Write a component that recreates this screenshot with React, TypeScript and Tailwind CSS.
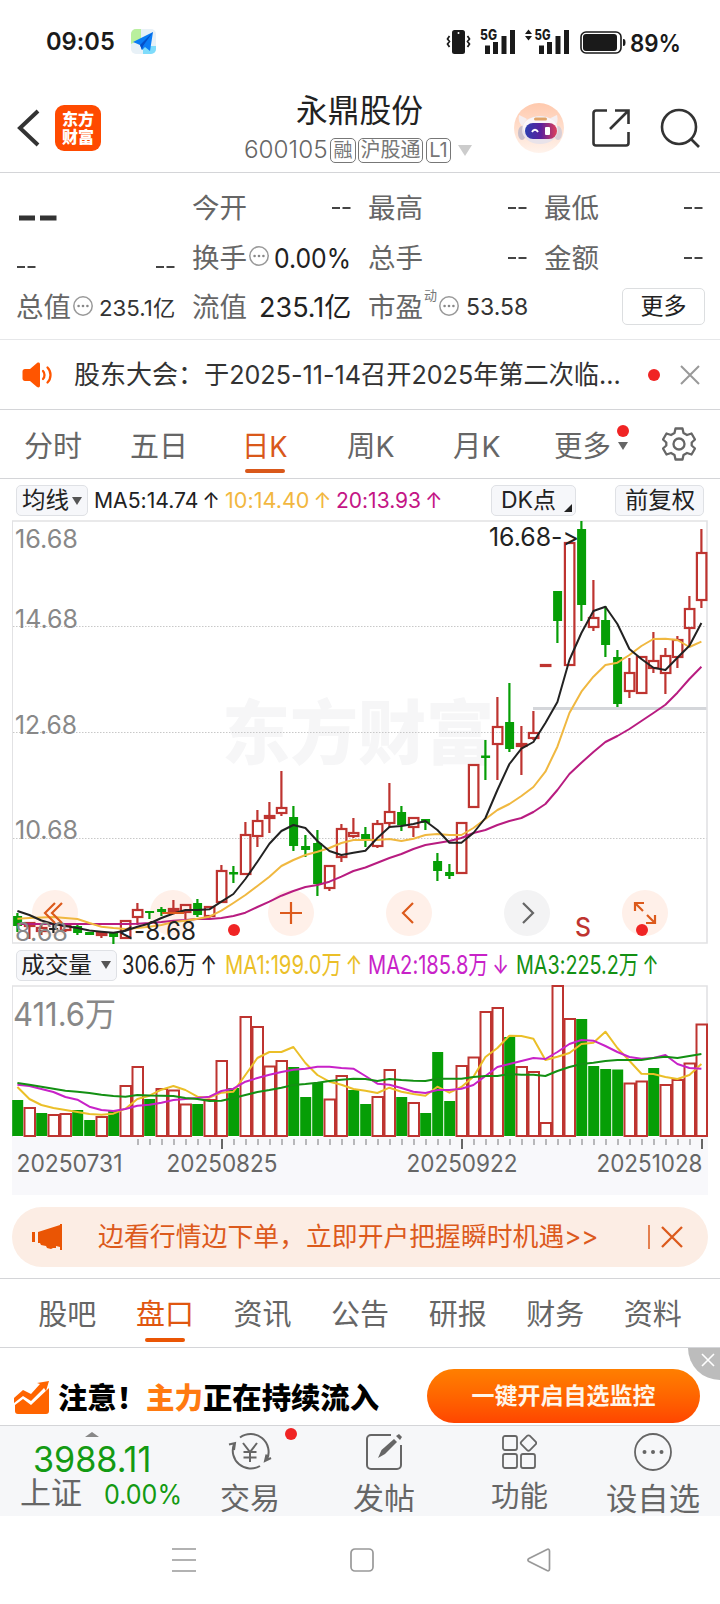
import { useLayoutEffect, useRef, useState, ReactNode } from "react";
import clsx from "clsx";

type Candle = [kind: "r" | "g" | "k", top: number, bottom: number, high: number, low: number];

// kind, body top/bottom, wick top/bottom
const CANDLES: Candle[] = [
  ["g", 916, 926, 913, 932], ["r", 923, 926, 922, 939], ["r", 928, 931, 923, 935], ["k", 928, 930, 925, 933],
  ["r", 926, 930, 924, 932], ["g", 926, 933, 924, 935], ["g", 932, 935, 932, 935], ["r", 933, 935, 932, 938],
  ["g", 933, 937, 933, 944], ["r", 921, 938, 921, 938], ["r", 910, 917, 903, 925], ["g", 911, 913, 911, 919],
  ["g", 909, 912, 907, 916], ["r", 909, 911, 900, 912], ["r", 905, 912, 905, 919], ["g", 903, 915, 899, 917],
  ["r", 907, 916, 906, 919], ["r", 871, 902, 865, 903], ["g", 872, 874.5, 866, 883], ["r", 835, 874, 822, 875],
  ["r", 821, 836, 810, 847], ["r", 816, 818, 802, 833], ["r", 808, 813, 771, 816], ["g", 817, 846, 806, 851],
  ["g", 846, 850, 835, 857], ["g", 843, 884, 830, 896], ["r", 866, 888, 865, 891], ["r", 829, 857, 824, 862],
  ["r", 833, 836, 818, 838], ["g", 834, 840, 827, 847], ["r", 824, 846, 820, 848], ["r", 812, 823, 783, 827],
  ["g", 812, 825, 806, 831], ["r", 818, 827, 817, 837], ["g", 819, 823, 819, 830], ["g", 861, 871, 853, 881],
  ["g", 872, 876, 864, 879], ["r", 823, 873, 822, 874], ["r", 765, 807, 765, 808], ["g", 755.5, 758, 740, 780],
  ["r", 727, 744, 697, 780], ["g", 722, 749, 683, 752], ["r", 744, 746, 726, 775], ["r", 733, 738, 711, 740],
  ["r", 665, 666, 664, 667], ["g", 591, 621, 591, 643], ["r", 543, 665, 543, 666], ["g", 529, 605, 521, 621],
  ["r", 618, 627, 580, 631], ["g", 620, 645, 606, 657], ["g", 657, 704, 650, 707], ["r", 673, 691, 658, 698],
  ["r", 657, 693, 657, 694], ["r", 661, 668, 632, 673], ["r", 656, 673, 648, 694], ["r", 640, 657, 636, 668],
  ["r", 609, 628, 596, 645], ["r", 553, 600, 529, 608],
];

const MA5 = [911, 915, 920.5, 924, 926, 928, 930.5, 931.7, 932.7, 930.7, 926.7, 923.5, 918, 913.5, 910, 910, 909.3, 901.7, 894, 879, 861.7, 843.7, 831, 825, 828, 841, 851, 855, 852.7, 850.7, 838, 827, 826, 824, 821, 830, 842.7, 842.7, 833, 818, 790, 764, 748.7, 742, 723, 702, 660, 633, 611, 606.7, 624, 649, 659, 667.7, 670, 657.7, 645.7, 623];
const MA10 = [918.7, 918, 917.5, 917, 918, 919, 923, 926.7, 928, 929, 928, 926.7, 925, 922, 920.7, 918.7, 916.7, 910.7, 903, 895, 886, 876.7, 866, 860, 855, 851.7, 848, 843, 840, 840, 840, 839, 841, 838.7, 835, 834, 835, 835, 828, 819, 810, 804, 796, 787, 771.7, 746.7, 713, 691.7, 676.7, 665, 662.7, 655, 646, 639, 638.7, 640, 647, 641.7];
const MA20 = [924, 924, 924, 924, 924, 924, 924, 924, 924, 924, 923.7, 923, 922, 920.7, 920, 919, 919, 918, 916, 912.7, 907, 901.7, 895.7, 891, 887, 885, 881.7, 876.7, 871, 867.5, 862.7, 858, 854, 849, 845, 843, 841, 838, 833, 830, 825, 821, 818, 812, 804, 790, 774, 762.7, 752, 742, 736, 729, 721, 713, 704.7, 692.7, 679, 666.7];

const VOLUMES = [1100, 1108, 1113, 1115, 1114, 1110, 1120, 1117, 1111, 1086, 1067, 1099, 1089, 1090.5, 1104.5, 1104, 1100, 1061, 1088, 1017, 1027, 1066.5, 1061, 1067, 1097, 1083, 1099.5, 1076, 1090, 1104, 1097, 1070, 1097, 1103, 1113, 1052, 1101, 1066, 1057.5, 1012, 1008, 1037, 1067, 1072, 1123, 986, 1019, 1019, 1066, 1069, 1069.5, 1083.5, 1081.5, 1068, 1085, 1080, 1063.5, 1024.5];
const VOL_KINDS = "grgrrggrgrrgrrrgrrgrrrrgggrrggrrgrgggrrrrgrrrrrggggrrgrrrr";
const VMA1 = [1087, 1099, 1105, 1108, 1110, 1112, 1114, 1114.7, 1113.7, 1108.7, 1099, 1095.7, 1089.7, 1086, 1090, 1096.7, 1097.7, 1092.7, 1091.7, 1075, 1058, 1052, 1052, 1047, 1063, 1075, 1081.7, 1084.7, 1089, 1090.7, 1093, 1087.7, 1091.7, 1094, 1095.7, 1086.7, 1092.7, 1087, 1076.7, 1057, 1048, 1035.7, 1036, 1038.7, 1060, 1056.7, 1053, 1044, 1042.7, 1031.7, 1048, 1060.7, 1073.7, 1074, 1077, 1079, 1075, 1064];
const VMA2 = [1084.7, 1086, 1089, 1092, 1097, 1099.7, 1106.7, 1110, 1111, 1109, 1105.7, 1104.7, 1102.7, 1100, 1099, 1098, 1096.7, 1091, 1088.7, 1081.7, 1078, 1074.7, 1072, 1069.7, 1068.7, 1066.7, 1066.7, 1068, 1068.7, 1076, 1083.7, 1084.7, 1088, 1091.7, 1093, 1090, 1090, 1088.7, 1085, 1076, 1067, 1064, 1061, 1058, 1059, 1052, 1044, 1040, 1040.7, 1046, 1052, 1057, 1058.7, 1058, 1055, 1064, 1068, 1068.7];
const VMA3 = [1083, 1084.7, 1086.7, 1088.7, 1090.7, 1091.7, 1093, 1094.7, 1096, 1096.7, 1095, 1095.5, 1095.7, 1096, 1098, 1099, 1101, 1100.7, 1098, 1095, 1092, 1090, 1087.7, 1085, 1084, 1082.7, 1081, 1079.7, 1078.7, 1079, 1081, 1079, 1080, 1080.7, 1081, 1078.7, 1078.7, 1078.7, 1077, 1076, 1076, 1074, 1074.7, 1074.7, 1076, 1071, 1067, 1064, 1062.7, 1061, 1060, 1060, 1060, 1058, 1056.7, 1058, 1056, 1054];

const RED = "#be3430";
const GREEN = "#069e06";

const px = (i: number) => 17.4 + i * 12;
const toPoints = (ys: number[]) => ys.map((y, i) => `${px(i)},${y}`).join(" ");

/* Squeezes or stretches a single line of text so that it fills exactly `w` pixels */
function Fit({ w, className, children }: { w: number; className?: string; children: ReactNode }) {
  const ref = useRef<HTMLSpanElement>(null);
  const [scale, setScale] = useState(1);

  useLayoutEffect(() => {
    if (ref.current) setScale(w / ref.current.offsetWidth);
  }, [w]);

  return (
    <span className={clsx("inline-flex shrink-0 whitespace-nowrap", className)} style={{ width: w }}>
      <span ref={ref} className="inline-block shrink-0 origin-left" style={{ transform: `scaleX(${scale})` }}>
        {children}
      </span>
    </span>
  );
}

function Dots() {
  return (
    <svg width="20" height="20" viewBox="0 0 20 20" className="shrink-0">
      <circle cx="10" cy="10" r="9.2" fill="none" stroke="#999" strokeWidth="1.5" />
      <circle cx="5.6" cy="10" r="1.3" fill="#888" />
      <circle cx="10" cy="10" r="1.3" fill="#888" />
      <circle cx="14.4" cy="10" r="1.3" fill="#888" />
    </svg>
  );
}

function StatusBar() {
  return (
    <div className="flex h-20 items-center pl-[46px] pr-[28px] pt-[3px] text-[#1a1a1a]">
      <Fit w={69} className="text-[24px] font-semibold leading-none">09:05</Fit>
      <svg width="25" height="25" viewBox="0 0 25 25" className="ml-[16px]">
        <rect width="25" height="25" rx="5" fill="#e8f1f7" />
        <path d="M5 0h5v10L0 15V5a5 5 0 0 1 5-5z" fill="#b9ef9d" />
        <path d="M12 17h13v3a5 5 0 0 1-5 5h-8z" fill="#7fdcfb" />
        <path d="M22 3 2 13l7 3 2 5 3-3 5 4z" fill="#0a7cf5" />
        <path d="M22 3 9 16l2 5 1-4z" fill="#0550c8" />
      </svg>
      <svg width="246" height="42" viewBox="0 -8 246 42" className="ml-auto" fill="#1a1a1a">
        <rect x="6" y="1" width="13" height="24" rx="2.5" />
        <circle cx="12.5" cy="4" r="1" fill="#fff" />
        <path d="m3.500 7-2 3 2 2.500-2 2.500 2 3M21.500 7l2 3-2 2.500 2 2.500-2 3" fill="none" stroke="#1a1a1a" strokeWidth="1.700" />
        <text x="34" y="11" fontSize="14" fontWeight="800" textLength="17" lengthAdjust="spacingAndGlyphs">5G</text>
        <path d="M39 16.500h5V25h-5zM47 13h5v12h-5zM55.500 7h5v18h-5zM64 1h5v24h-5z" />
        <path d="m79 5 3.500-4.500L86 5zM79 7h7l-3.500 4.500z" />
        <text x="88.500" y="11" fontSize="14" fontWeight="800" textLength="16" lengthAdjust="spacingAndGlyphs">5G</text>
        <path d="M93 16.500h5V25h-5zM101 13h5v12h-5zM109.500 7h5v18h-5zM118 1h5v24h-5z" />
        <rect x="135" y="3" width="40" height="21" rx="5" fill="none" stroke="#1a1a1a" strokeWidth="1.600" />
        <rect x="137" y="5" width="34" height="17" rx="3" />
        <path d="M177 10c2 0 2.500 1 2.500 3.500S179 17 177 17z" />
        <text x="184" y="22.500" fontSize="24" fontWeight="600" textLength="51" lengthAdjust="spacingAndGlyphs">89%</text>
      </svg>
    </div>
  );
}

function Header() {
  return (
    <header className="flex h-[93px] items-center border-b border-[#d4d5d8] pl-[17px] pr-[20px]">
      <svg width="24" height="38" viewBox="0 0 24 38" className="mt-1">
        <path d="M21 2 3 19l18 17" fill="none" stroke="#333" strokeWidth="4" />
      </svg>
      <div className="ml-[14px] mt-1 flex h-[46px] w-[46px] flex-col items-center justify-center rounded-[9px] bg-[#ff4a00] text-[16px] font-black leading-[18px] text-white">
        <span>东方</span>
        <span>财富</span>
      </div>

      <div className="ml-[143px] flex w-[230px] flex-col pt-1">
        <div className="flex h-[40px] items-center pl-[52px]">
          <Fit w={127} className="text-[32px] leading-none text-[#222]">永鼎股份</Fit>
        </div>
        <div className="mt-[4px] flex h-[30px] items-center text-[#777]">
          <Fit w={84} className="text-[24px] font-light leading-none text-[#666]">600105</Fit>
          <span className="ml-[2px] flex h-[25px] w-[26px] items-center justify-center rounded-[5px] border-[1.500px] border-[#777] text-[19px] leading-none">融</span>
          <span className="ml-[2px] flex h-[25px] w-[65px] items-center justify-center rounded-[5px] border-[1.500px] border-[#777] text-[20px] leading-none">沪股通</span>
          <span className="ml-[3px] flex h-[25px] w-[25px] items-center justify-center rounded-[5px] border-[1.500px] border-[#777] text-[20px] leading-none">L1</span>
          <svg width="14" height="11" viewBox="0 0 14 11" className="ml-[7px] shrink-0">
            <path d="M0 0h14L7 11z" fill="#ccc" />
          </svg>
        </div>
      </div>

      <div className="ml-auto mt-1 flex items-center">
        <svg width="50" height="50" viewBox="0 0 50 50">
          <defs>
            <linearGradient id="halo" x1="0" y1="0" x2="0" y2="1">
              <stop offset="0" stopColor="#ffc9ad" />
              <stop offset="1" stopColor="#fff3ec" />
            </linearGradient>
            <linearGradient id="visor" x1="0" y1="0" x2="1" y2="0">
              <stop offset="0" stopColor="#2b3fb0" />
              <stop offset="0.5" stopColor="#5b209c" />
              <stop offset="1" stopColor="#e0405a" />
            </linearGradient>
          </defs>
          <circle cx="25" cy="25" r="25" fill="url(#halo)" />
          <path d="M5 12c2 1 5 2 8 4l-5 7c-3-3-4-7-3-11zM43 12c-2 1-5 2-8 4l6 7c3-3 3-7 2-11z" fill="#f5eef0" />
          <ellipse cx="8" cy="30" rx="4" ry="7" fill="#c9bfc9" />
          <ellipse cx="44" cy="30" rx="4" ry="7" fill="#d9cfd6" />
          <ellipse cx="26" cy="27" rx="18" ry="14" fill="#e9e3ea" />
          <ellipse cx="26" cy="24" rx="17" ry="10.500" fill="#faf6f8" />
          <rect x="11" y="20" width="32" height="16" rx="8" fill="url(#visor)" />
          <rect x="20" y="14.500" width="13" height="3" rx="1.500" fill="#e0a468" />
          <path d="M18 29c1.500-3 4.500-3 6 0" fill="none" stroke="#fff" strokeWidth="1.800" />
          <rect x="31" y="24" width="5" height="8" rx="1" fill="#fff" />
        </svg>
        <svg width="38" height="38" viewBox="0 0 38 38" className="ml-[28px]" fill="none" stroke="#333" strokeWidth="2.600">
          <path d="M15 1.500H4A2.500 2.500 0 0 0 1.500 4v30A2.500 2.500 0 0 0 4 36.500h30a2.500 2.500 0 0 0 2.500-2.500V23M23 1.500h13.500V15M36.500 1.500 18 20" />
        </svg>
        <svg width="40" height="40" viewBox="0 0 40 40" className="ml-[30px]" fill="none" stroke="#333" strokeWidth="2.600">
          <circle cx="19" cy="19" r="17" />
          <path d="m31 31 8 8" />
        </svg>
      </div>
    </header>
  );
}

function Label({ children }: { children: ReactNode }) {
  return <Fit w={55} className="text-[27px] leading-none text-[#666]">{children}</Fit>;
}

function Dash() {
  return (
    <svg width="20" height="4" viewBox="0 0 20 4" className="shrink-0">
      <path d="M1 2h8M11.500 2h8" stroke="#444" strokeWidth="2" />
    </svg>
  );
}

function Quote() {
  return (
    <section className="grid h-[167px] grid-cols-[160px_159px_159px_159px] grid-rows-[50px_50px_49px] gap-x-[17px] border-b border-[#e6e7e9] pl-[15px] pt-[10px]">
      <div className="flex items-center pl-[4px]">
        <svg width="38" height="6" viewBox="0 0 38 6" className="mt-[20px]">
          <path d="M0 3h16M21 3h16.500" stroke="#333" strokeWidth="5" />
        </svg>
      </div>
      <div className="flex items-center justify-between"><Label>今开</Label><Dash /></div>
      <div className="flex items-center justify-between"><Label>最高</Label><Dash /></div>
      <div className="flex items-center justify-between"><Label>最低</Label><Dash /></div>

      <div className="flex items-center justify-between pl-px pt-[17px]"><Dash /><Dash /></div>
      <div className="flex items-center">
        <Label>换手</Label>
        <span className="mb-1 ml-[2px]"><Dots /></span>
        <Fit w={77} className="ml-auto text-[27px] leading-none text-[#222]">0.00%</Fit>
      </div>
      <div className="flex items-center justify-between"><Label>总手</Label><Dash /></div>
      <div className="flex items-center justify-between"><Label>金额</Label><Dash /></div>

      <div className="flex items-center pl-px">
        <Label>总值</Label>
        <span className="mb-1 ml-[2px]"><Dots /></span>
        <Fit w={76} className="ml-auto text-[22px] leading-none text-[#333]">235.1亿</Fit>
      </div>
      <div className="flex items-center justify-between">
        <Label>流值</Label>
        <Fit w={92} className="text-[27px] leading-none text-[#222]">235.1亿</Fit>
      </div>
      <div className="flex items-center">
        <Label>市盈</Label>
        <span className="mb-6 ml-px text-[13px] leading-none text-[#777]">动</span>
        <span className="mb-1 ml-[2px]"><Dots /></span>
        <Fit w={62} className="ml-[7px] text-[23px] leading-none text-[#333]">53.58</Fit>
      </div>
      <div className="flex items-center pb-[3px] pl-[78px]">
        <div className="flex h-[37px] w-[83px] shrink-0 items-center justify-center rounded-[5px] border-[1.500px] border-[#dcdee0] text-[23px] leading-none text-[#222]">更多</div>
      </div>
    </section>
  );
}

function Notice() {
  return (
    <section className="flex h-[70px] items-center border-b border-[#d4d5d8] pl-[22px]">
      <svg width="31" height="26" viewBox="0 0 31 26" fill="#ff5500">
        <path d="M3 7h5l7-6c1.500-1 3-.5 3 1.500v21c0 2-1.500 2.500-3 1.500l-7-6H3c-1.500 0-2.500-1-2.500-2.500v-7C.5 8 1.500 7 3 7z" />
        <path d="M21 9c2 2 2 6 0 8M25.500 5.500c4 4 4 11 0 15" fill="none" stroke="#ff5500" strokeWidth="2.300" strokeLinecap="round" />
      </svg>
      <Fit w={130} className="ml-[21px] text-[26px] leading-none text-[#333]">股东大会：</Fit>
      <Fit w={417} className="text-[26px] leading-none text-[#333]">于2025-11-14召开2025年第二次临...</Fit>
      <span className="ml-[27px] h-[12px] w-[12px] rounded-full bg-[#f02424]" />
      <svg width="20" height="20" viewBox="0 0 20 20" className="ml-[20px]">
        <path d="m1 1 18 18M19 1 1 19" stroke="#999" strokeWidth="2" />
      </svg>
    </section>
  );
}

const PERIODS: [string, number][] = [["分时", 58], ["五日", 58], ["日K", 46], ["周K", 48], ["月K", 48]];

function PeriodTabs() {
  return (
    <nav className="flex h-[69px] items-center border-b border-[#d4d5d8] text-[29px] leading-none text-[#666]">
      {PERIODS.map(([name, w], i) => (
        <div key={name} className={clsx("relative flex h-full w-[106px] items-center justify-center pt-[4px]", i === 2 && "text-[#d9581a]")}>
          <Fit w={w}>{name}</Fit>
          {i === 2 && <span className="absolute bottom-[5px] h-[4px] w-10 rounded-full bg-[#d9581a]" />}
        </div>
      ))}
      <div className="relative ml-[24px] flex items-center pt-[4px]">
        <Fit w={57}>更多</Fit>
        <svg width="10" height="8" viewBox="0 0 10 8" className="ml-[7px]">
          <path d="M0 0h10L5 8z" fill="#666" />
        </svg>
        <span className="absolute -right-px -top-[3px] h-3 w-3 rounded-full bg-[#f02424]" />
      </div>
      <svg width="34" height="34" viewBox="0 0 34 34" className="ml-[34px]" fill="none" stroke="#666" strokeWidth="2.300" strokeLinejoin="round">
        <path d="M13.500 1.500h7l1 4.500 3.500 2 4.500-1.500 3.500 6-3.300 3v3l3.300 3-3.500 6-4.500-1.500-3.500 2-1 4.500h-7l-1-4.500-3.500-2-4.500 1.500-3.500-6 3.300-3v-3l-3.300-3 3.500-6L9 8l3.500-2z" />
        <circle cx="17" cy="17" r="5.500" />
      </svg>
    </nav>
  );
}

function Chip({ className, children }: { className?: string; children: ReactNode }) {
  return (
    <div className={clsx("flex h-[31px] shrink-0 items-center rounded-[5px] border-[1.500px] border-[#dfe1e5] bg-[#f6f7fa] text-[23px] leading-none text-[#222]", className)}>
      {children}
    </div>
  );
}

function AverageRow() {
  return (
    <div className="flex h-[41px] items-center pl-4 pr-4 pt-[2px] text-[21px] leading-none">
      <Chip className="w-[72px] pl-[5px]">
        <Fit w={47}>均线</Fit>
        <svg width="10" height="8" viewBox="0 0 10 8" className="ml-[3px]"><path d="M0 0h10L5 8z" fill="#555" /></svg>
      </Chip>
      <Fit w={126} className="ml-[6px] text-[#222]">MA5:14.74{"\u2009"}↑</Fit>
      <Fit w={106} className="ml-[5px] text-[#f2b740]">10:14.40{"\u2009"}↑</Fit>
      <Fit w={106} className="ml-[5px] text-[#c41585]">20:13.93{"\u2009"}↑</Fit>
      <Chip className="relative ml-auto w-[85px] pl-[9px]">
        <Fit w={55}>DK点</Fit>
        <svg width="8" height="8" viewBox="0 0 8 8" className="absolute bottom-[3px] right-[3px]"><path d="M8 0v8H0z" fill="#222" /></svg>
      </Chip>
      <Chip className="ml-[39px] w-[89px] pl-[9px]">
        <Fit w={70}>前复权</Fit>
      </Chip>
    </div>
  );
}

function KLineChart() {
  return (
    <svg width="720" height="425" viewBox="0 520 720 425" className="block">
      <text x="222" y="759" fontSize="70" fontWeight="900" fill="#f6f6f7" textLength="272" lengthAdjust="spacingAndGlyphs">东方财富</text>
      <g stroke="#c8c8c8" strokeDasharray="1.500 1.500">
        <path d="M13 626.500h694M13 732.500h694M13 838.500h694" />
      </g>
      <path d="M533 708.500h174" stroke="#d4d6da" strokeWidth="3" />
      <path d="M12.500 521v422" stroke="#e2e2e4" />
      <path d="M12 521h695v422H12" fill="none" stroke="#e2e2e4" strokeWidth="1.600" />

      {[55, 173, 291, 409, 645].map((x) => <circle key={x} cx={x} cy="913" r="23" fill="#fff0e9" />)}
      <circle cx="527" cy="913" r="23" fill="#f3f3f4" />

      {CANDLES.map(([kind, top, bottom, high, low], i) => {
        const x = px(i);
        if (kind === "r") {
          return (
            <g key={i} stroke={RED} strokeWidth="2.200" fill="none">
              <path d={`M${x} ${high}V${top}M${x} ${bottom}V${low}`} />
              <rect x={x - 4.5} y={top} width="9.500" height={bottom - top} />
            </g>
          );
        }
        const color = kind === "g" ? GREEN : "#222";
        return (
          <g key={i} fill={color}>
            <rect x={x - 1.1} y={high} width="2.200" height={low - high} />
            <rect x={x - 4.3} y={top} width="9" height={bottom - top} />
          </g>
        );
      })}

      <g fill="none" strokeWidth="2" strokeLinejoin="round">
        <polyline points={toPoints(MA20)} stroke="#b81c80" />
        <polyline points={toPoints(MA10)} stroke="#f0b840" />
        <polyline points={toPoints(MA5)} stroke="#222" />
      </g>

      <g fontSize="25.500" fill="#888">
        <text x="15" y="547.500" textLength="63" lengthAdjust="spacingAndGlyphs">16.68</text>
        <text x="15" y="627.500" textLength="63" lengthAdjust="spacingAndGlyphs">14.68</text>
        <text x="15" y="733.500" textLength="62" lengthAdjust="spacingAndGlyphs">12.68</text>
        <text x="15" y="838.500" textLength="63" lengthAdjust="spacingAndGlyphs">10.68</text>
        <text x="15" y="940.500" textLength="53" lengthAdjust="spacingAndGlyphs">8.68</text>
      </g>
      <g fontSize="25.500" fill="#222">
        <text x="489" y="545.500" textLength="90" lengthAdjust="spacingAndGlyphs">16.68-&gt;</text>
        <text x="118" y="939.500" textLength="78" lengthAdjust="spacingAndGlyphs">&lt;-8.68</text>
      </g>

      <g fill="none" stroke="#dc5a1c" strokeWidth="2.200">
        <path d="M55 903 45 913l10 10M62 903 52 913l10 10" />
        <path d="M162 913h22M280 913h22M291 902v22" />
        <path d="m413 903-10 10 10 10" />
        <path d="m643 911-8-8M635 911v-8h9M647 915l8 8M655 915v8h-9" />
      </g>
      <path d="m523 903 10 10-10 10" fill="none" stroke="#666" strokeWidth="2.200" />
      <circle cx="234" cy="930" r="6" fill="#f02424" />
      <circle cx="642" cy="930" r="6" fill="#f02424" />
      <text x="575" y="936" fontSize="26" fontWeight="500" fill={RED} textLength="16" lengthAdjust="spacingAndGlyphs">S</text>
    </svg>
  );
}

function VolumeRow() {
  return (
    <div className="flex h-[40px] items-center pl-4 text-[26px] leading-none">
      <Chip className="w-[101px] pl-[4px]">
        <Fit w={71}>成交量</Fit>
        <svg width="10" height="8" viewBox="0 0 10 8" className="ml-[9px]"><path d="M0 0h10L5 8z" fill="#555" /></svg>
      </Chip>
      <Fit w={95} className="ml-[5px] text-[#222]">306.6万{"\u2009"}↑</Fit>
      <Fit w={137} className="ml-[8px] text-[#ebbf28]">MA1:199.0万{"\u2009"}↑</Fit>
      <Fit w={141} className="ml-[6px] text-[#c822c8]">MA2:185.8万{"\u2009"}↓</Fit>
      <Fit w={143} className="ml-[7px] text-[#139013]">MA3:225.2万{"\u2009"}↑</Fit>
    </div>
  );
}

function VolumeChart() {
  const ticks = Array.from({ length: 48 }, (_, i) => i + 10);
  return (
    <svg width="720" height="210" viewBox="0 985 720 210" className="block">
      <rect x="12" y="1137" width="696" height="58" fill="#f8f8fb" />
      <path d="M12.500 1137V986" stroke="#e2e2e4" />
      <path d="M12 986h695v151" fill="none" stroke="#e2e2e4" strokeWidth="1.600" />
      <text x="13" y="1025.500" fontSize="33" fill="#888" textLength="103" lengthAdjust="spacingAndGlyphs">411.6万</text>
      {VOLUMES.map((top, i) =>
        VOL_KINDS[i] === "r" ? (
          <rect key={i} x={px(i) - 4.9} y={top} width="10.500" height={1136 - top} fill="#fff" stroke={RED} strokeWidth="2" />
        ) : (
          <rect key={i} x={px(i) - 5.2} y={top} width="11" height={1136 - top} fill={GREEN} />
        ),
      )}
      <g fill="none" strokeWidth="2" strokeLinejoin="round">
        <polyline points={toPoints(VMA1)} stroke="#ebbf28" />
        <polyline points={toPoints(VMA2)} stroke="#c822c8" />
        <polyline points={toPoints(VMA3)} stroke="#139013" />
      </g>
      {ticks.map((i) => {
        const major = i === 17 || i === 37 || i === 57;
        return <rect key={i} x={px(i) - 0.4} y="1139" width="2" height={major ? 10 : 6} fill={major ? "#666" : "#b8b8bb"} />;
      })}
      <g fontSize="24" fill="#666">
        <text x="16.500" y="1171.500" textLength="106" lengthAdjust="spacingAndGlyphs">20250731</text>
        <text x="166.500" y="1171.500" textLength="111" lengthAdjust="spacingAndGlyphs">20250825</text>
        <text x="406.500" y="1171.500" textLength="111" lengthAdjust="spacingAndGlyphs">20250922</text>
        <text x="596.500" y="1171.500" textLength="106" lengthAdjust="spacingAndGlyphs">20251028</text>
      </g>
    </svg>
  );
}

function PromoBar() {
  return (
    <div className="mx-3 mt-3 flex h-[60px] items-center rounded-full bg-[#fcede4] pl-5">
      <svg width="30" height="26" viewBox="0 0 30 26" fill="#ea5504">
        <path d="M0 8h3v10H0zM6 8l22-7V0h2v26h-2v-3l-4-1v2h-3l-2 1-4-1-1-2-5-1-1-2H6z" />
      </svg>
      <Fit w={207} className="ml-[36px] text-[26px] leading-none text-[#dc5a1c]">边看行情边下单，</Fit>
      <Fit w={292} className="ml-px text-[26px] leading-none text-[#dc5a1c]">立即开户把握瞬时机遇&gt;&gt;</Fit>
      <svg width="36" height="24" viewBox="0 0 36 24" className="ml-[50px]" fill="none" stroke="#dc5a1c">
        <path d="M1 0v24" strokeWidth="1.500" />
        <path d="m14 2 20 20M34 2 14 22" strokeWidth="2.300" />
      </svg>
    </div>
  );
}

function InfoTabs() {
  return (
    <nav className="mt-[11px] flex h-[70px] items-center border-y border-[#d4d5d8] pl-[18.500px] text-[29px] leading-none text-[#666]">
      {["股吧", "盘口", "资讯", "公告", "研报", "财务", "资料"].map((name, i) => (
        <div key={name} className={clsx("relative flex h-full w-[97.600px] shrink-0 items-center justify-center pt-[3px]", i === 1 && "text-[#e0560f]")}>
          <Fit w={58}>{name}</Fit>
          {i === 1 && <span className="absolute bottom-[5px] h-[4px] w-10 rounded-full bg-[#ea5504]" />}
        </div>
      ))}
    </nav>
  );
}

function AdBanner() {
  return (
    <section className="relative flex h-[78px] items-center border-b border-[#d4d5d8] pl-[14px] pt-[19px]">
      <svg width="36" height="34" viewBox="0 0 36 34" fill="#ff6400" className="mt-[3px]">
        <path d="M0 17 9 9l8 4L26 3l-3-1 12-2-3 10-2-3-13 13-8-5-9 7z" />
        <path d="m1 24 8-6 8 6 18-17v23a3 3 0 0 1-3 3H4a3 3 0 0 1-3-3z" />
      </svg>
      <div className="ml-[8px] mt-[4px] flex text-[29px] font-black leading-none text-black">
        <Fit w={88}>注意！</Fit>
        <Fit w={57} className="text-[#ff7a10]">主力</Fit>
        <Fit w={176}>正在持续流入</Fit>
      </div>
      <div className="ml-auto mr-[20px] flex h-[54px] w-[273px] items-center justify-center rounded-full bg-linear-to-b from-[#ff7f00] to-[#ff4500] text-[23px] font-bold leading-none text-[#fff6ea]">
        <Fit w={184}>一键开启自选监控</Fit>
      </div>
      <div className="absolute right-0 top-0 h-8 w-8 rounded-bl-full bg-[#bcbcbc]">
        <svg width="14" height="14" viewBox="0 0 14 14" className="ml-[13px] mt-[5px]">
          <path d="m1 1 12 12M13 1 1 13" stroke="#fff" strokeWidth="1.600" />
        </svg>
      </div>
    </section>
  );
}

function BottomBar() {
  return (
    <footer className="flex h-[90px] bg-[#f6f7f9] leading-none text-[#666]">
      <div className="relative w-[184px]">
        <svg width="14" height="5" viewBox="0 0 14 5" className="absolute left-[85px] top-[6px]"><path d="M0 5 7 0l7 5z" fill="#888" /></svg>
        <div className="flex h-[51px] items-end pl-[33px] text-[#139a13]">
          <Fit w={118} className="text-[35px]">3988.11</Fit>
        </div>
        <div className="flex h-[35px] items-center pl-[20px]">
          <Fit w={62} className="-mt-[4px] text-[31px]">上证</Fit>
          <Fit w={78} className="ml-[22px] text-[27px] text-[#139a13]">0.00%</Fit>
        </div>
      </div>
      <div className="relative flex w-[132px] flex-col items-center pt-[7px]">
        <svg width="44" height="38" viewBox="0 0 44 38" fill="none" stroke="#666" strokeWidth="2">
          <path d="M12 4.500a18 18 0 0 1 27 22M32 33A18 18 0 0 1 6 11M1 11.500l6-1.500-1 7M43 25l-6 3 1.500-6.500" />
          <path d="m15 10 7 9 7-9M22 19v10M15.500 19h13M15.500 24.500h13" />
        </svg>
        <span className="absolute left-[101px] top-[2px] h-3 w-3 rounded-full bg-[#f02424]" />
        <Fit w={60} className="mt-[12px] text-[30px]">交易</Fit>
      </div>
      <div className="flex w-[136px] flex-col items-center pt-[7px]">
        <svg width="38" height="38" viewBox="0 0 38 38" fill="none" stroke="#666" strokeWidth="2">
          <path d="M26 2H6a4 4 0 0 0-4 4v26a4 4 0 0 0 4 4h26a4 4 0 0 0 4-4V12" />
          <path d="m13 25 3.500-8L29 6l3 3-12 12z" fill="#666" stroke="none" />
          <path d="m31 3 3-2 3 3-2 3z" fill="#666" stroke="none" />
        </svg>
        <Fit w={62} className="mt-[12px] text-[30px]">发帖</Fit>
      </div>
      <div className="flex w-[134px] flex-col items-center pt-[7px]">
        <svg width="36" height="38" viewBox="0 0 36 38" fill="none" stroke="#666" strokeWidth="1.800">
          <rect x="2" y="3" width="14" height="14" rx="2" />
          <rect x="2" y="21" width="14" height="14" rx="2" />
          <rect x="20" y="21" width="14" height="14" rx="2" />
          <rect x="21.500" y="4" width="12" height="12" rx="2" transform="rotate(45 27.500 10)" />
        </svg>
        <Fit w={57} className="mt-[11px] text-[29px]">功能</Fit>
      </div>
      <div className="flex flex-1 flex-col items-center pt-[7px]">
        <svg width="38" height="38" viewBox="0 0 38 38" fill="none" stroke="#666" strokeWidth="1.800">
          <circle cx="19" cy="19" r="18" />
          <path d="M10.500 19h.01M19 19h.01M27.500 19h.01" strokeWidth="4" strokeLinecap="round" />
        </svg>
        <Fit w={94} className="mt-[12px] text-[31px]">设自选</Fit>
      </div>
    </footer>
  );
}

function SystemNav() {
  return (
    <div className="flex h-[88px] items-center pl-[172px]">
      <svg width="380" height="26" viewBox="0 0 380 26" fill="none" stroke="#999" strokeWidth="1.700">
        <path d="M0 2h24M0 13h24M0 24h24" />
        <rect x="179" y="2" width="22" height="22" rx="4" />
        <path d="M375 2.500c1.500-.7 2.500 0 2.500 1.500v18c0 1.500-1 2.200-2.500 1.500l-18-9c-1.500-1-1.500-2 0-3z" />
      </svg>
    </div>
  );
}

export default function App() {
  return (
    <main className="h-[1604px] w-[720px] overflow-hidden bg-white font-['Inter','Noto_Sans_CJK_SC',sans-serif] [font-feature-settings:'calt'_0]">
      <StatusBar />
      <Header />
      <Quote />
      <Notice />
      <PeriodTabs />
      <AverageRow />
      <KLineChart />
      <VolumeRow />
      <VolumeChart />
      <PromoBar />
      <InfoTabs />
      <AdBanner />
      <BottomBar />
      <SystemNav />
    </main>
  );
}
